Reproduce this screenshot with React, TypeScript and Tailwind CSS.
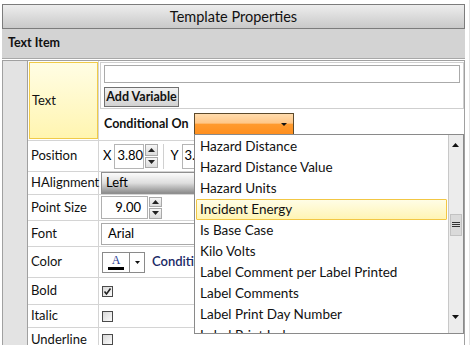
import React from "react";

const FONT = "font-['Segoe_UI','Lato',sans-serif]";

function Spinner({ h = 24 }: { h?: number }) {
  return (
    <div className="flex flex-col w-[13px] gap-[1px]" style={{ height: h }}>
      <div className="flex-1 border border-[#a9a9a9] bg-gradient-to-b from-[#f6f6f6] to-[#dcdcdc] flex items-center justify-center">
        <svg width="7" height="4" viewBox="0 0 7 4"><path d="M0 4 L3.5 0 L7 4 Z" fill="#222" /></svg>
      </div>
      <div className="flex-1 border border-[#a9a9a9] bg-gradient-to-b from-[#f6f6f6] to-[#dcdcdc] flex items-center justify-center">
        <svg width="7" height="4" viewBox="0 0 7 4"><path d="M0 0 L3.5 4 L7 0 Z" fill="#222" /></svg>
      </div>
    </div>
  );
}

function Check({ checked }: { checked?: boolean }) {
  return (
    <div className="w-[11px] h-[11px] border border-[#4a4a4a] bg-gradient-to-br from-[#d8d8d8] to-[#fbfbfb] flex items-center justify-center">
      {checked && (
        <svg width="9" height="9" viewBox="0 0 9 9"><path d="M1.5 4.5 L3.5 7 L7.5 1.5" stroke="#222" strokeWidth="1.6" fill="none" /></svg>
      )}
    </div>
  );
}

function Row({ label, h, children }: { label: string; h: number; children?: React.ReactNode }) {
  return (
    <div className="flex border-b border-[#d4d4d4]" style={{ height: h }}>
      <div className="w-[71px] shrink-0 border-r border-[#d4d4d4] flex items-center pl-[3px] text-[#111]">{label}</div>
      <div className="flex-1 flex items-center pl-[2px]">{children}</div>
    </div>
  );
}

const items = [
  "Hazard Distance",
  "Hazard Distance Value",
  "Hazard Units",
  "Incident Energy",
  "Is Base Case",
  "Kilo Volts",
  "Label Comment per Label Printed",
  "Label Comments",
  "Label Print Day Number",
  "Label Print Ind",
];

export default function App() {
  return (
    <div className={`relative w-[471px] h-[345px] bg-white overflow-hidden text-[13px] text-black ${FONT}`}>
      <div className="absolute right-[1px] top-0 bottom-0 w-px bg-[#e4e4e4]" />
      <div className="pt-[4px] pl-[2px] w-[465px]">
        <div className="h-[25px] border border-[#7c7c7c] bg-gradient-to-b from-[#ededed] to-[#c9c9c9] flex items-center justify-center text-[14.5px] text-[#111]">
          Template Properties
        </div>
        <div className="h-[29px] bg-[#d3d3d3] flex items-center pl-[6px] font-bold text-[12.5px] text-[#111]">Text Item</div>
        <div className="border-t border-[#a8a8a8] h-[2px] bg-white" />
        <div className="flex border-t border-l border-r border-[#a0a0a0] h-[300px]">
          <div className="w-[25px] shrink-0 bg-[#e3e3e3] border-r border-[#a0a0a0]" />
          <div className="flex-1 flex flex-col">
            {/* Text row */}
            <div className="flex border-b border-[#d4d4d4] h-[80px]">
              <div className="w-[71px] shrink-0 border-r border-[#d4d4d4] py-[1px] pl-[1px] pr-0">
                <div className="h-full border border-[#f0cb48] bg-gradient-to-b from-[#fffde4] to-[#fff5b0] flex items-center pl-[2px] text-[#111]">Text</div>
              </div>
              <div className="flex-1 flex flex-col pl-[1px] pt-[1px]">
                <div className="h-[47px] border border-[#cfcfcf] px-[3px] pt-[2px] flex flex-col gap-[4px]">
                  <div className="h-[18px] border border-[#aaaaaa] bg-white" />
                  <div className="h-[20px] w-[75px] border border-[#707070] bg-gradient-to-b from-[#f2f2f2] to-[#d2d2d2] flex items-center justify-center font-bold text-[12.5px] text-[#111]">Add Variable</div>
                </div>
                <div className="flex items-center pl-[4px] pt-[4px]">
                  <span className="font-bold text-[12.5px] text-[#111] w-[90px] shrink-0 whitespace-nowrap">Conditional On</span>
                  <div className="w-[100px] h-[22px] border border-[#5c4a2c] bg-[linear-gradient(to_bottom,#ffdcae_0%,#ffc788_45%,#ff9a2e_52%,#ff8f1e_100%)] flex items-center justify-end pr-[6px]">
                    <svg width="6" height="3" viewBox="0 0 6 3"><path d="M0 0 L3 3 L6 0 Z" fill="#111" /></svg>
                  </div>
                </div>
              </div>
            </div>
            <Row label="Position" h={31}>
              <div className="flex items-center h-[26px]">
                <span className="ml-[2px] mr-[3px]">X</span>
                <div className="w-[30px] h-[25px] border border-[#b5b5b5] flex items-center pl-[2px]">3.80</div>
                <div className="ml-[1px]"><Spinner h={24} /></div>
                <div className="w-px h-[25px] bg-[#d0d0d0] ml-[5px] mr-[6px]" />
                <span className="mr-[3px]">Y</span>
                <div className="w-[40px] h-[25px] border border-[#b5b5b5] flex items-center pl-[2px]">3.40</div>
              </div>
            </Row>
            <Row label="HAlignment" h={23}>
              <div className="w-[200px] h-[22px] border border-[#8f8f8f] bg-gradient-to-b from-[#fbfbfb] via-[#dedede] to-[#8d8d8d] flex items-center pl-[4px]">Left</div>
            </Row>
            <Row label="Point Size" h={26}>
              <div className="flex items-center">
                <div className="w-[47px] h-[23px] border border-[#b0b0b0] flex items-center justify-end pr-[6px]">9.00</div>
                <div className="ml-[1px]"><Spinner h={22} /></div>
              </div>
            </Row>
            <Row label="Font" h={26}>
              <div className="w-[200px] h-[22px] border border-[#aaaaaa] flex items-center pl-[6px]">Arial</div>
            </Row>
            <Row label="Color" h={31}>
              <div className="flex items-center">
                <div className="ml-[1px] w-[43px] h-[21px] border border-[#8a8a8a] bg-white flex">
                  <div className="w-[27px] border-r border-[#8a8a8a] flex flex-col items-center justify-center">
                    <span className="font-['Liberation_Serif',serif] text-[12px] leading-[11px] text-[#1f3a93]">A</span>
                    <div className="w-[16px] h-[3px] bg-black mt-[1px]" />
                  </div>
                  <div className="flex-1 flex items-center justify-center">
                    <svg width="5" height="3" viewBox="0 0 5 3"><path d="M0 0 L2.5 3 L5 0 Z" fill="#111" /></svg>
                  </div>
                </div>
                <span className="ml-[7px] font-semibold text-[#1a2a66]">Conditional</span>
              </div>
            </Row>
            <Row label="Bold" h={27}>
              <div className="ml-[1px]"><Check checked /></div>
            </Row>
            <Row label="Italic" h={23}>
              <div className="ml-[1px]"><Check /></div>
            </Row>
            <Row label="Underline" h={24}>
              <div className="ml-[1px]"><Check /></div>
            </Row>
          </div>
        </div>
      </div>

      {/* Dropdown popup */}
      <div className="absolute left-[194px] top-[134px] w-[270px] h-[200px] bg-white border border-[#8a8a8a] flex">
        <div className="flex-1 flex flex-col pl-[1px] pr-[1px] pt-[1px] overflow-hidden">
          {items.map((t, i) => (
            <div
              key={t}
              className={`h-[21px] shrink-0 flex items-center pl-[3px] text-[#111] text-[13.5px] ${i === 3 ? "border border-[#f2c744] bg-gradient-to-b from-[#fffde6] to-[#fff4b4] rounded-[1px]" : "border border-transparent"}`}
            >
              {t}
            </div>
          ))}
        </div>
        <div className="w-[15px] shrink-0 bg-[#ececec] border-l border-[#c8c8c8] relative">
          <div className="absolute top-[8px] left-[3px]">
            <svg width="7" height="4" viewBox="0 0 7 4"><path d="M0 4 L3.5 0 L7 4 Z" fill="#111" /></svg>
          </div>
          <div className="absolute top-[79px] left-[1px] w-[12px] h-[22px] bg-[#dadada] border border-[#c2c2c2] flex items-center justify-center">
            <svg width="8" height="6" viewBox="0 0 8 6"><path d="M0 0.5 H8 M0 2.5 H8 M0 4.5 H8" stroke="#333" strokeWidth="1" /></svg>
          </div>
          <div className="absolute bottom-[14px] left-[3px]">
            <svg width="7" height="4" viewBox="0 0 7 4"><path d="M0 0 L3.5 4 L7 0 Z" fill="#111" /></svg>
          </div>
        </div>
      </div>
    </div>
  );
}
